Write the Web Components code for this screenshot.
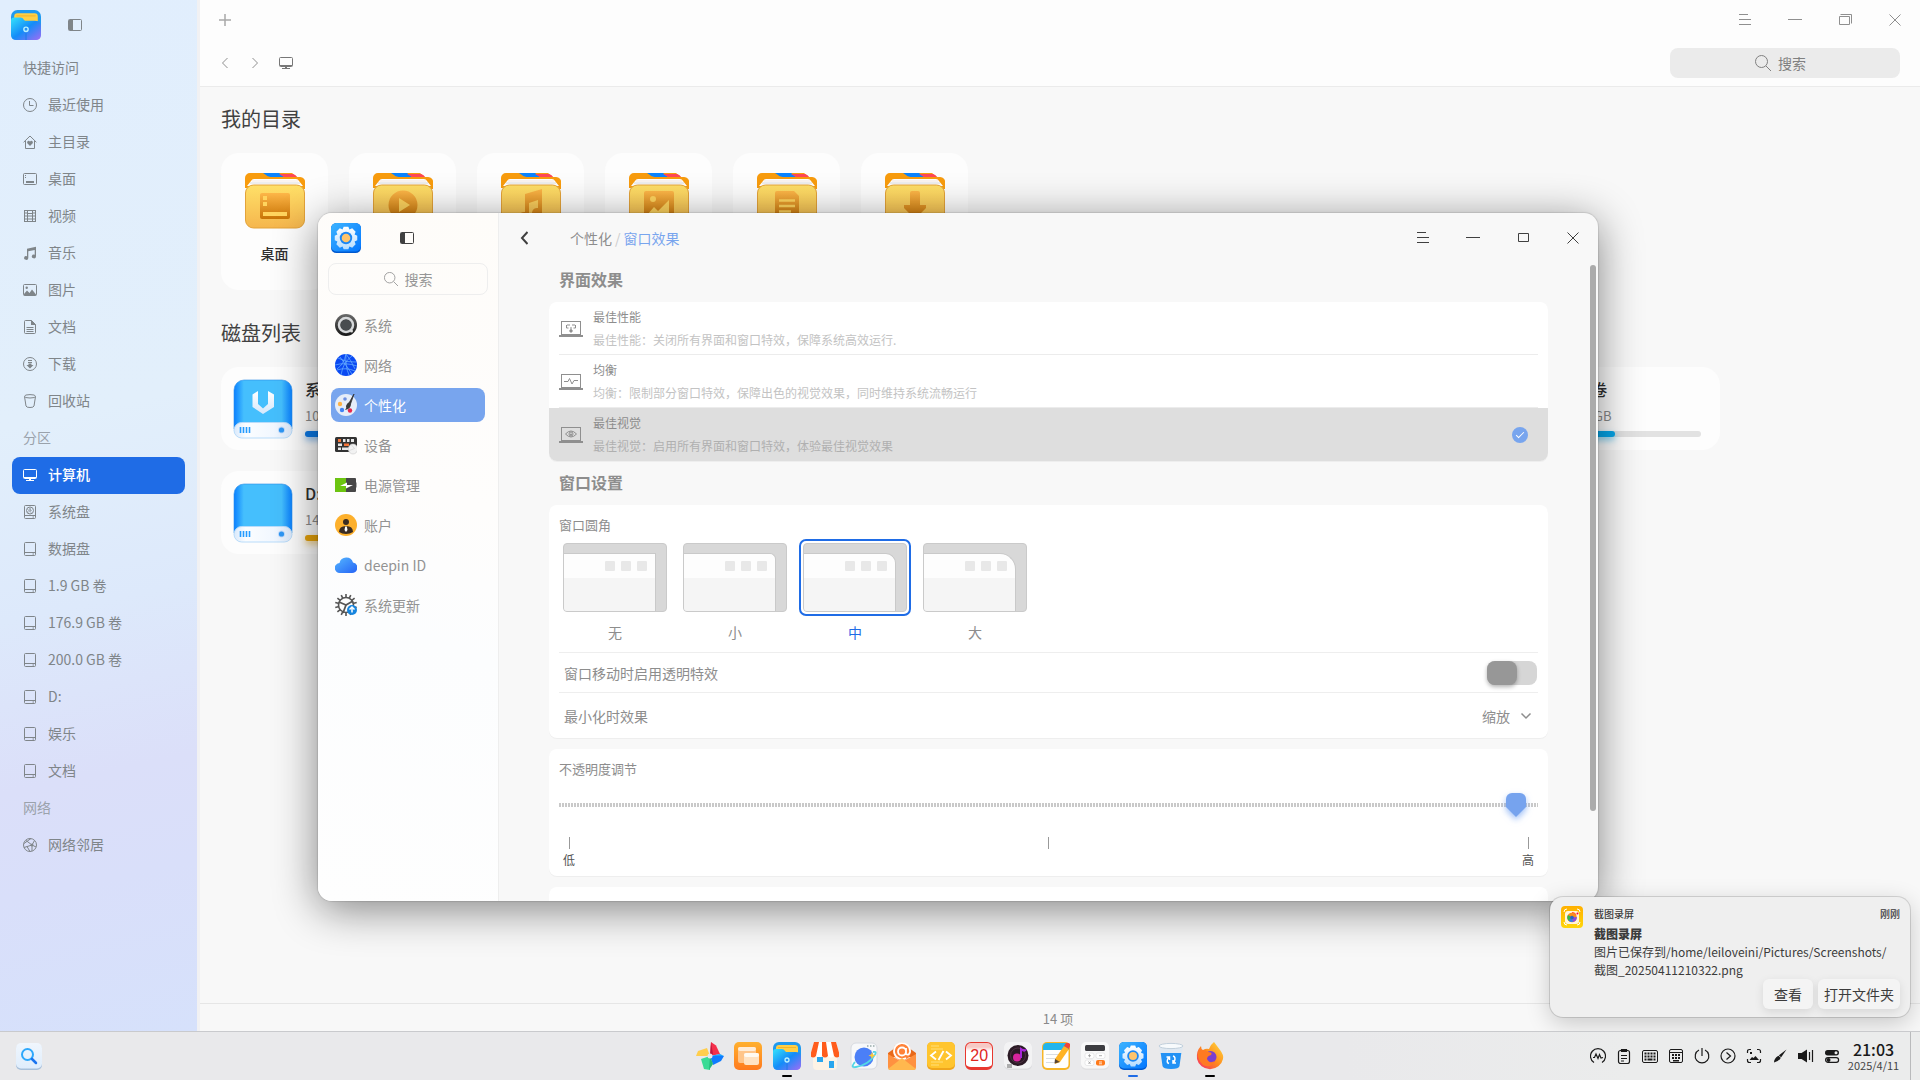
<!DOCTYPE html>
<html lang="zh-CN">
<head>
<meta charset="utf-8">
<title>计算机</title>
<style>
html, body { margin: 0; height: 100%; }
body { font: 14px/20px "Noto Sans CJK SC", "Noto Sans", sans-serif; color: #414d68; overflow: hidden; background: #f8f8f8; }
</style>
</head>
<body>
<desktop-shell>
  <file-manager></file-manager>
  <control-center slot="window"></control-center>
  <desktop-toast slot="window" app="截图录屏" time="刚刚" heading="截图录屏">图片已保存到/home/leiloveini/Pictures/Screenshots/<br>截图_20250411210322.png</desktop-toast>
  <task-dock slot="dock"></task-dock>
</desktop-shell>

<script>
/* ---------- icons: [width, height, markup] ---------- */
const line = (w, h, body, sw = 1) => [w, h, `<g fill="none" stroke="currentColor" stroke-width="${sw}">${body}</g>`];
const F = 'fill="currentColor" stroke="none"';
const drive = '<rect x="1.5" y=".5" width="11" height="13" rx="1"/><path d="M1.5 10.5h11M9.5 12h1.5"/>';

const folder = emblem => [60, 56, `
  <defs>
    <linearGradient id="a" x2="0" y2="1"><stop stop-color="#ffe068"/><stop offset="1" stop-color="#f5b64d"/></linearGradient>
    <linearGradient id="e" x2="0" y2="1"><stop stop-color="#fdb648"/><stop offset="1" stop-color="#c87406"/></linearGradient>
  </defs>
  <path d="M0 15V5a5 5 0 0 1 5-5h42l5 4h3a5 5 0 0 1 5 6v6z" fill="#f89c0e"/>
  <path d="M18 0h16l5 4h-11q-5 0-7-2z" fill="#0a84ff"/><path d="M34 1h14q3 1 4 3H39z" fill="#ff4757"/>
  <path d="M9 6h42q2 0 3 2l4 5H2l4-5q1-2 3-2z" fill="#fff"/><path d="M5 10h50" stroke="#dcdcdc"/><path d="M7 8h46" stroke="#ecd9d2" stroke-width=".6"/>
  <rect x=".5" y="12" width="59" height="43" rx="8" fill="url(#a)" stroke="#e3a33a"/>
  ${emblem}`];
const hdd = mark => [60, 60, `
  <defs>
    <linearGradient id="d"><stop stop-color="#0a80ff"/><stop offset=".17" stop-color="#45bffd"/><stop offset=".82" stop-color="#45bffd"/><stop offset="1" stop-color="#0a80ff"/></linearGradient>
    <linearGradient id="t"><stop stop-color="#d9e9fb"/><stop offset=".2" stop-color="#fbfdff"/><stop offset=".7" stop-color="#f1f7ff"/><stop offset="1" stop-color="#dce9fa"/></linearGradient>
    <linearGradient id="u" x2="0" y2="1"><stop stop-color="#fff"/><stop offset="1" stop-color="#d5e8fc"/></linearGradient>
  </defs>
  <path d="M1 50V11A10 10 0 0 1 11 1h38a10 10 0 0 1 10 10v39z" fill="url(#d)" stroke="#2d8fe8" stroke-width=".6"/>
  <rect x="1" y="43.500" width="58" height="15.500" rx="7.700" fill="url(#t)" stroke="#b9dcfa"/>
  <path d="M7.500 48v6M10.500 48v6M13.500 48v6M16.500 48v6" stroke="#249bff" stroke-width="1.600"/>
  <circle cx="48.500" cy="51" r="3.500" fill="#c5ddfb"/><circle cx="48.500" cy="51" r="2.600" fill="#2d96f5"/>${mark}`];
const keys = (x0, y0, cols, rows) => Array.from({ length: rows }, (_, r) => Array.from({ length: cols }, (_, c) =>
  `<rect x="${x0 + c * 3}" y="${y0 + r * 3}" width="2" height="2"/>`).join('')).join('');
const teeth = (cx, cy, r, n, w, h) => Array.from({ length: n }, (_, i) =>
  `<rect x="${cx - w / 2}" y="${cy - r}" width="${w}" height="${h}" transform="rotate(${i * 360 / n} ${cx} ${cy})"/>`).join('');

const ICONS = {
  recent: line(14, 14, '<circle cx="7" cy="7" r="6.500"/><path d="M6.500 3v4.500h4"/>'),
  home: line(14, 14, `<path d="M.6 7.300 7 1l6.400 6.300M2.500 6v7.500h9V6"/><path ${F} d="M7 11 4.300 8.200A1.500 1.500 0 0 1 7 6.700a1.500 1.500 0 0 1 2.700 1.500z"/>`),
  desktop: line(14, 14, `<rect x=".5" y="1.500" width="13" height="11" rx="1"/><path ${F} d="M2 3h1v1H2zM2 5h1v1H2zM3 9h8v2H3z"/>`),
  video: line(14, 14, '<rect x="1.500" y="1.500" width="11" height="11"/><path d="M4.500 1.500v11M9.500 1.500v11M4.500 7h5M4.500 4.500h5M4.500 10h5M2 4h2M2 7h2M2 10h2M10 4h2M10 7h2M10 10h2" />'),
  music: line(14, 14, `<path ${F} d="M4 2.800 13 .8v9.700a2.100 1.900 0 1 1-1.300-1.800V4L5.300 5.300v6.700A2.100 1.900 0 1 1 4 10.200z"/>`),
  picture: line(14, 14, `<rect x=".5" y="1.500" width="13" height="11" rx="1"/><circle cx="3.700" cy="4.700" r="1.200" ${F}/><path ${F} d="M1 12.500V11l3-3.500L6.500 10 9 6.500l4 5v1z"/>`),
  doc: line(14, 14, `<path d="M1.500 1.500q0-1 1-1H8.500l4 4v8q0 1-1 1h-9q-1 0-1-1zM3.500 7.500h7M3.500 9.500h7M3.500 11.500h7"/><path ${F} d="M8 0v5h5z"/>`),
  download: line(14, 14, `<circle cx="7" cy="7" r="6.500"/><path d="M5 3.500h4M5 5.500h4"/><path ${F} d="M5.500 6.500h3V8h2L7 11.500 3.500 8h2z"/>`),
  trash: line(14, 14, '<ellipse cx="7" cy="2.300" rx="5.500" ry="1.700"/><path d="M1.500 2.500 3 12q.3 1.500 4 1.500t4-1.500l1.500-9.500"/>'),
  computer: line(14, 14, `<rect x=".5" y="1.500" width="13" height="9" rx="1"/><path ${F} d="M1 9h12v1H1zM6 11h2v1H6zM3 12h8v1H3z"/>`),
  sysdrive: line(14, 14, drive + '<circle cx="7" cy="5.500" r="3.500"/><path d="M5 4.500 8 7.500M7 3v2l1.500.5M5 6.500v1"/>'),
  drive: line(14, 14, drive),
  network: line(14, 14, '<circle cx="7" cy="7" r="6.500"/><path d="M3 2.500 9 7l4 2M9 7 1 9.500M9 7l2.500-4.500M1 5.500l7-5M9 7v6M4 8.500l3 5" /><circle cx="9" cy="7" r="1"/>'),
  panel: line(14, 12, `<rect x=".5" y=".5" width="13" height="11" rx="1"/><path ${F} d="M1 1h4v10H1z"/>`),
  plus: line(12, 12, '<path d="M6 0v12M0 6h12"/>', 1.5),
  left: line(8, 12, '<path d="M6.500 1 1.500 6l5 5"/>'),
  right: line(8, 12, '<path d="M1.500 1l5 5-5 5"/>'),
  back: line(8, 14, '<path d="M7.500 1 2 7l5.500 6"/>', 2),
  down: line(12, 8, '<path d="M1.500 1.500 6 6l4.500-4.500"/>', 1.5),
  menu: line(14, 12, '<path d="M1 .5h9M1 5.500h12M1 10.500h12"/>'),
  min: line(14, 12, '<path d="M0 5.500h14"/>'),
  restore: line(14, 12, '<path d="M2.500.5h11v9M1.500 2.500h10v8h-10z"/>'),
  max: line(14, 12, '<path d="M2.500 1.500h10v8h-10z"/>'),
  close: line(12, 12, '<path d="M.5.5l11 11M11.500.5l-11 11"/>'),
  find: line(16, 16, '<circle cx="6.500" cy="6.500" r="6"/><path d="m11 11 5 5"/>'),
  perf: line(24, 16, `<rect x="2.500" y=".5" width="19" height="13"/><path ${F} d="M0 14h24v2H0z"/><path d="M8 4h3M13 4h3M7.500 4v3h2M16.500 4v3h-2M12 6v2"/><path ${F} d="M12 7.500 14 10l-2 2-2-2z"/>`),
  balance: line(24, 16, `<rect x="2.500" y=".5" width="19" height="13"/><path ${F} d="M0 14h24v2H0z"/><path d="M5 7.500h4l1.500-3L13 10l2-3.500h4"/>`),
  visual: line(24, 16, `<rect x="2.500" y=".5" width="19" height="13"/><path ${F} d="M0 14h24v2H0z"/><path d="M6.500 7q5.500-6 11 0-5.500 6-11 0z"/><circle cx="12" cy="7" r="2"/><circle cx="12" cy="7.500" r="1" ${F}/>`),

  fDesktop: folder('<path d="M17 20h26q2 0 2 2v22q0 2-2 2H17q-2 0-2-2V22q0-2 2-2z" fill="url(#e)"/><path d="M18 23h4v4h-4zM18 29h4v4h-4zM18 39h24v4H18z" fill="#ffd45e"/>'),
  fVideo: folder('<circle cx="30" cy="32" r="14.500" fill="url(#e)"/><path d="M26 25v14l11-7z" fill="#ffd45e"/>'),
  fMusic: folder('<path d="M24 21 41 16v24a5 5 0 1 1-4-5V27l-9 3v14a5 5 0 1 1-4-5z" fill="url(#e)"/>'),
  fPicture: folder('<rect x="15" y="18" width="30" height="28" rx="2" fill="url(#e)"/><circle cx="24" cy="26" r="3" fill="#ffd45e"/><path d="M18 42 25 34l4 4L40 27v15z" fill="#ffd45e"/>'),
  fDoc: folder('<path d="M20 18h17l5 5v20q0 3-3 3H21q-3 0-3-3V20q0-2 2-2z" fill="url(#e)"/><path d="M22 27.500h16M22 33h16M22 38.500h12" stroke="#ffd45e" stroke-width="2.500"/>'),
  fDownload: folder('<path d="M25 20q0-2 2-2h6q2 0 2 2v12h6v3L30 46 19 35v-3h6z" fill="url(#e)"/>'),
  hdd: hdd(''),
  hddSystem: hdd('<path d="M19.500 15.500 25 12v13l5 4.500 5-4.500V12l6 3.500v12.500L30 35l-10.500-7z" fill="url(#u)"/>'),

  appFiles: [28, 28, `<defs><linearGradient id="a" y2="1"><stop stop-color="#35e3fb"/><stop offset=".5" stop-color="#148cf8"/><stop offset="1" stop-color="#a06cf5"/></linearGradient></defs>
    <rect width="28" height="28" rx="6" fill="#1f9af0"/><rect x="3" y="3" width="22" height="13" rx="3" fill="#ffcf45"/><path d="M5 5.500h18" stroke="#f2b52b"/>
    <path d="M0 10q0-3 3-3h6q2 0 3 2l1 1h9q6 0 6 5v8q0 5-5 5H5q-5 0-5-5z" fill="url(#a)"/><path d="M14 21v7" stroke="#1d7be8"/><circle cx="14" cy="18" r="2" fill="#2491f5" stroke="#b8f1ff" stroke-width="1.300"/>`],
  appSettings: [28, 28, `<defs><linearGradient id="a" x2="1" y2="1"><stop stop-color="#3db4ff"/><stop offset="1" stop-color="#0376ff"/></linearGradient><linearGradient id="b" x2="0" y2="1"><stop stop-color="#fff"/><stop offset="1" stop-color="#b5dcff"/></linearGradient></defs>
    <rect width="28" height="28" rx="5" fill="#0059cf"/><rect width="28" height="26.500" rx="5" fill="url(#a)"/>
    <path d="M11.800 3.500h4.400l1 2.500 2.600-1 3.200 3.200-1 2.600 2.500 1v4.400l-2.500 1 1 2.600-3.200 3.200-2.600-1-1 2.500h-4.400l-1-2.500-2.600 1L5 19.800l1-2.600-2.500-1v-4.400l2.500-1-1-2.600L8.200 5l2.600 1z" fill="url(#b)"/>
    <circle cx="14" cy="14" r="5.800" fill="#1c87f5"/><circle cx="14" cy="14" r="4" fill="#ffc46b"/>`],
  launcher: [28, 28, `<path d="M15 0 20 3.500 24 12 14 14z" fill="#f5304b"/><path d="M28 14 25 19 17 23l-3-9z" fill="#0f7bff"/><path d="M24 12 14 14l3 0h11z" fill="#1ba0ff"/><path d="M14 28 8 27 5 17l9-3z" fill="#3adb95"/><path d="M13 28l1-14 3 8z" fill="#25b97a"/><path d="M0 14 2 9l9-3 3 8z" fill="#ffce4d"/><path d="M15 0l-1 14 3-2z" fill="#c31840"/><circle cx="14" cy="14" r="2.500" fill="#e7e7ea"/>`],
  multitask: [28, 28, `<defs><linearGradient id="a" x2="0" y2="1"><stop stop-color="#ffb02e"/><stop offset="1" stop-color="#ff7a1e"/></linearGradient></defs><rect width="28" height="28" rx="5" fill="url(#a)"/><rect x="4" y="5" width="18" height="16" rx="2" fill="#ffc58a"/><rect x="4" y="5" width="18" height="4" rx="2" fill="#ffecd6"/><rect x="10" y="11" width="15" height="12" rx="2" fill="#ffe3c4"/><rect x="10" y="11" width="15" height="4" rx="2" fill="#fffaf2"/>`],
  store: [28, 28, `<rect x="2" y="10" width="24" height="18" rx="4" fill="#fdf3e6"/><path d="M3 0h22l4 14q-3 3-6 0-3 3-6 0-3 3-6 0-3 3-6 0-3 3-6 0z" fill="#fff"/><path d="M3 0h5L5 14q-3 3-6 0zM11 0h4l2 14q-3 3-6 0zM20 0h5l4 14q-3 3-6 0z" fill="#ff5c1c"/><path d="M6 15h6v5H6zM18 19h5v7h-5z" fill="#2aa6ee"/>`],
  browser: [28, 28, `<rect x="1" y="1" width="26" height="26" rx="5" fill="#f7f8fa" stroke="#d7dae0"/><path d="M17 4h1.500M20 4h1.500M23 4h1.500" stroke="#9aa" stroke-width="1.500"/><circle cx="14" cy="15" r="9.500" fill="#4b7ff7"/><path d="M5 20q-5 6 1 5 12-2 18-11 4-5-1-4" fill="none" stroke="#52d6e5" stroke-width="1.800"/><path d="m22 10 1 2.500 2.500 1-2.500 1-1 2.500-1-2.500-2.500-1 2.500-1z" fill="#ffc83a"/>`],
  mail: [28, 28, `<path d="M0 11 14 1l14 10v4H0z" fill="#e8691a"/><circle cx="14" cy="9.500" r="9" fill="#ff8238"/><path d="M18 6v6q3 2 4-2a8 8 0 1 0-4 6M18 9.500a4 4 0 1 1-8 0 4 4 0 0 1 8 0" fill="none" stroke="#fff" stroke-width="1.800"/><path d="M0 12 14 20 28 12v13q0 3-3 3H3q-3 0-3-3z" fill="#ff9140"/><path d="M0 27 14 16l14 11q-1 1-3 1H3q-2 0-3-1z" fill="#ffb84e"/>`],
  editor: [28, 28, `<rect width="28" height="28" rx="5" fill="#f0a61c"/><rect width="28" height="26" rx="5" fill="#ffc52f"/><path d="M4 4h8M4 7h12M4 20h12M4 23h8" stroke="#ffdf7a"/><path d="M9 9.500 4 13.500l5 4M19 9.500l5 4-5 4M16.500 9l-5 9" fill="none" stroke="#fff" stroke-width="1.800"/>`],
  music28: [28, 28, `<rect width="28" height="28" rx="5" fill="#dcdcde"/><rect width="28" height="26.500" rx="5" fill="#f3f3f4"/><circle cx="14" cy="13.500" r="10.500" fill="#2b1a25"/><circle cx="14" cy="13.500" r="7.500" fill="none" stroke="#55384a" stroke-width=".8"/><circle cx="13" cy="15.500" r="4" fill="#d9249e"/><path d="M16 16V5q3 3 7 2-1 4-5 2v7z" fill="#a626d6"/><path d="M3 25h5M3 23h5" stroke="#666"/>`],
  notes: [28, 28, `<rect width="28" height="28" rx="5" fill="#f7b628"/><path d="M1.500 8h25v14q0 4-4 4h-17q-4 0-4-4z" fill="#fff"/><path d="M1 8V5q0-4 4-4h18q4 0 4 4v3z" fill="#23b5ec"/><path d="M4 12.500h18M4 16.500h14M4 20.500h10" stroke="#d9dde2"/><path d="m13 17 9-13 5 3-9 13-5 2z" fill="#ffb325"/><path d="m22 4 1.500-2.500q2-1.500 4 0t0 3.500L27 7z" fill="#f04438"/><path d="m13 17-.5 4.500L18 20z" fill="#5a4632"/>`],
  calc: [28, 28, `<rect y="1" width="28" height="27" rx="5" fill="#e0e0e2"/><rect width="28" height="26.500" rx="5" fill="#f8f8f8"/><rect x="4" y="3" width="20" height="6" rx="1.500" fill="#3c3c40"/><g fill="#fff" stroke="#dcdcde" stroke-width=".6"><rect x="4" y="11" width="9" height="5.500" rx="2"/><rect x="15" y="11" width="9" height="5.500" rx="2"/><rect x="4" y="18" width="9" height="5.500" rx="2"/></g><rect x="15" y="18" width="9" height="5.500" rx="2" fill="#ff7a1a"/><path d="M7 13.700h3M8.500 12.200v3M18 13.700h3M7.500 19.500l2 2.500M9.500 19.500l-2 2.500" stroke="#999" stroke-width=".8"/><path d="M18 20h3M18 21.800h3" stroke="#fff" stroke-width=".8"/>`],
  trashFull: [28, 28, `<path d="M3 6h22l-2.500 18q-.5 3-8.500 3t-8.500-3z" fill="#2292f5"/><path d="M2.300 4h23.400L25 11H3z" fill="#dfe8f1"/><ellipse cx="14" cy="4" rx="12" ry="2.600" fill="#f7fafc" stroke="#c2d0dc"/><path d="M12 21.500q-3-1-1-5l1-1M9.500 15h3v3M16 14q3 1 1.500 5l-1 1.500M19 21h-3v-3" fill="none" stroke="#fff" stroke-width="1.500"/>`],
  firefox: [28, 28, `<defs><linearGradient id="a" x1="1" y1="0" x2="0" y2="1"><stop stop-color="#ffe03f"/><stop offset=".5" stop-color="#ff8a1d"/><stop offset="1" stop-color="#f5266f"/></linearGradient></defs><path d="M18 0q3 4 6 8 4 5 3 9a13.300 13 0 0 1-26 0Q0 9 5 4q0 3 2 4 3-2 6-1 1-4 5-7z" fill="url(#a)"/><circle cx="14.500" cy="15" r="6" fill="#7a3fd0"/><path d="M2 10q6-4 10 0 5 0 3 3-4 1-4 4 2 5 8 2-4 8-12 4Q1 18 2 10z" fill="#ff7a22"/>`],
  search28: [28, 28, `<defs><linearGradient id="a" x2="0" y2="1"><stop stop-color="#f0f6fd"/><stop offset="1" stop-color="#dfedfc"/></linearGradient></defs><rect x="1" y="2" width="26" height="26" rx="5" fill="#a8c0da"/><rect x="1" y="1" width="26" height="25.500" rx="5" fill="url(#a)"/><circle cx="12.500" cy="12.500" r="5.500" fill="none" stroke="#2ea8fb" stroke-width="2"/><path d="m17 17 4 4" stroke="#1b74f0" stroke-width="2.500" stroke-linecap="round"/>`],
  capture: [22, 22, `<defs><linearGradient id="a" x2="0" y2="1"><stop stop-color="#ffb000"/><stop offset="1" stop-color="#ffd60a"/></linearGradient></defs><rect width="22" height="22" rx="4" fill="url(#a)"/><path d="M3 6q0-3 3-3M16 3q3 0 3 3M3 16q0 3 3 3M19 16q0 3-3 3" fill="none" stroke="#fff"/><rect x="4" y="5" width="14" height="13" rx="3" fill="#fff6dc"/><path d="M11 11V6a5 5 0 0 1 4.500 3z" fill="#ff4a3d"/><circle cx="11" cy="11.500" r="4.800" fill="#fb8c1c"/><path d="M11 11.500 15.800 11a4.800 4.800 0 0 1-3.800 5z" fill="#8a4be0"/><path d="M11 11.500 12 16a4.800 4.800 0 0 1-4.500-1.500z" fill="#2f7df0"/><path d="M11 11.500 7.500 14.700A4.800 4.800 0 0 1 7 9z" fill="#35b552"/><circle cx="11" cy="11.500" r="1.800" fill="#2b63c4"/><circle cx="16.500" cy="7.500" r="1" fill="#f03"/>`],

  sSystem: [22, 22, `<defs><linearGradient id="a" x2="0" y2="1"><stop stop-color="#6b6b6b"/><stop offset="1" stop-color="#161616"/></linearGradient></defs><circle cx="11" cy="11" r="11" fill="url(#a)"/><circle cx="11" cy="11" r="7" fill="#3f4244" stroke="#d6d8da" stroke-width="2.500"/><circle cx="11" cy="11" r="5.300" fill="#494d50"/><circle cx="16.500" cy="17" r="1.500" fill="#ddd"/>`],
  sNetwork: [22, 22, `<circle cx="11" cy="11" r="11" fill="#0a49f2"/><path d="M11 0q-2 10-9 15M11 0q-1 12 3 21M11 0q5 6 9 15M3 4q8 5 18 4M0 11q10-3 22 1M2 16q9-3 18 1M5 3q6 8 12 17M17 2Q8 8 6 21" fill="none" stroke="#6fb4ff" stroke-width=".7"/>`],
  sPersonal: [22, 22, `<circle cx="11" cy="11" r="11" fill="#e6edf8"/><circle cx="5" cy="10" r="2.200" fill="#ffb347"/><circle cx="10" cy="5" r="1.800" fill="#6d8fe0"/><circle cx="7" cy="16" r="2.200" fill="#3f82f5"/><circle cx="15" cy="16.500" r="2.200" fill="#e8264e"/><path d="M19 0 14 9l1.500 1z" fill="#333" stroke="#333" stroke-width=".8"/><path d="M13.500 8.500 16 10q0 5-6 6 2-2 1-4 1-3 2.500-3.500z" fill="#3a3a3a"/>`],
  sDevice: [22, 22, `<rect y="3" width="22" height="15" rx="1.500" fill="#333"/><path d="M3 5h3v3H3z" fill="#f4763a"/><path d="M8 5h2.500v3H8zM12 5h2.500v3H12zM16 5h3v3h-3zM3 9.500h4v2.500H3zM3 13.500h3v2.500H3zM7 13.500h7v2.500H7z" fill="#e8e8e8"/><path d="M9 9.500h5v2.500H9z" fill="#f4763a"/><ellipse cx="18" cy="15" rx="4.700" ry="5" fill="#f2f2f2" stroke="#c9c9c9" stroke-width=".6"/><path d="M16 10.500l3.500 4-5 2" fill="none" stroke="#ccc" stroke-width=".6"/>`],
  sPower: [22, 22, `<rect y="4" width="21" height="14" rx="1" fill="#474747"/><path d="M1 4h10v14H1q-1 0-1-1V5q0-1 1-1z" fill="#6cc510"/><path d="M21 8.500h1v5h-1z" fill="#aaa"/><path d="m5 12 7-3.500v2.500h6l-7 3.500V12z" fill="#fff"/>`],
  sAccount: [22, 22, `<circle cx="11" cy="11" r="11" fill="#fdb02c"/><circle cx="11" cy="8" r="3" fill="#3a2c22"/><path d="M4 18q0-6 7-6t7 6q-3 2-7 2t-7-2z" fill="#3a2c22"/><path d="M10.200 12.500h1.600L12.500 16 11 18l-1.500-2z" fill="#fff"/>`],
  sCloud: [22, 22, `<defs><linearGradient id="a" x2="1" y2="1"><stop stop-color="#55b7ff"/><stop offset="1" stop-color="#2563f5"/></linearGradient></defs><path d="M5 19a5 5 0 0 1-.5-10 7 7 0 0 1 13.500-.5A5.300 5.300 0 0 1 17 19z" fill="url(#a)"/>`],
  sUpdate: [22, 22, `<g fill="#555">${teeth(11, 11, 11, 14, 1.6, 4)}</g><circle cx="11" cy="11" r="7.500" fill="#fdfdfd" stroke="#555" stroke-width="1.600"/><path d="M11 11 4 8M11 11l7-4M11 11l-3 8" stroke="#555" stroke-width="1.800"/><circle cx="17" cy="16" r="5" fill="#1685df"/><path d="M17 18.500v-4M14.500 15.500 17 13l2.500 2.500" fill="none" stroke="#fff" stroke-width="1.500"/>`],

  tWave: line(16, 16, '<path d="M4 14.500a7.500 7.500 0 1 1 8 0M3 9.500l1.500 0 1.500-3.500L8 10.500l1.500-4 1.500 3.500 2-.5"/>', 1.2),
  tClip: line(16, 16, '<rect x="2.500" y="2.500" width="11" height="13" rx="2"/><path d="M5 7.500h6M5 10.500h6M5 13h3M5.500 1.500h5v2h-5z"/>', 1.2),
  tKeys: [16, 16, `<rect x=".5" y="2.500" width="15" height="12" rx="1.500" fill="none" stroke="currentColor"/><g fill="currentColor">${keys(2.5, 4.500, 4, 2)}<path d="M2.500 10.500h2v2h-2zM5.500 10.500h5v2h-5zM11.500 10.500h2v2h-2z"/></g>`],
  tBoard: [16, 16, `<rect x="1.500" y="1.500" width="13" height="13" rx="1.500" fill="none" stroke="currentColor"/><path d="M2 4.500h12" stroke="currentColor"/><g fill="currentColor">${keys(4, 6, 3, 1)}${keys(4, 9, 3, 1)}<path d="M5 12h6v1.500H5z"/></g>`],
  tPower: line(16, 16, '<path d="M5 2a6.800 6.800 0 1 0 6 0M8 0v8"/>', 1.2),
  tNext: line(16, 16, '<circle cx="8" cy="8" r="7"/><path d="M6.500 4.500 10.500 8l-4 3.500"/>', 1.2),
  tShot: line(16, 16, `<path d="M1.500 5V3.500q0-2 2-2H5M11 1.500h1.500q2 0 2 2V5M1.500 11v1.500q0 2 2 2H5M14.500 11v1.500q0 2-2 2H11"/><path ${F} d="m3.500 12 2.500-3 1.500 1L9.500 8l3.500 4zM4 4h2v2H4z"/>`, 1.2),
  tPen: [16, 16, '<path d="M2 14.500q0-4 4-6.500L14.500 1.500 9 9.500q-2 4-7 5z" fill="currentColor"/><path d="m6 7 4 3.500" stroke="#ebecec" stroke-width=".8"/>'],
  tVolume: [16, 16, '<path d="M0 5h3.500L9 1.500v13L3.500 11H0z" fill="currentColor"/><path d="M11.500 4v8M14.500 2v12" stroke="currentColor" stroke-width="1.200"/>'],
  tSwitch: [16, 16, '<rect x="1" y="2" width="14" height="5.500" rx="2.700" fill="currentColor"/><circle cx="12" cy="4.700" r="1.500" fill="#ebecec"/><rect x="1.600" y="9.600" width="13" height="4.800" rx="2.400" fill="none" stroke="currentColor" stroke-width="1.200"/><circle cx="4.500" cy="12" r="2" fill="currentColor"/>'],
};

/* ---------- element helper ---------- */
const RESET = `
  *, *::before, *::after { box-sizing: border-box; }
  button, input, select { font: inherit; color: inherit; margin: 0; }
  button { border: 0; padding: 0; background: none; display: flex; align-items: center; justify-content: center; }
  a { color: inherit; text-decoration: none; }
  h2, h3, p { margin: 0; padding: 0; font-weight: inherit; font-size: inherit; }
`;
function define(name, css, html) {
  customElements.define(name, class extends HTMLElement {
    constructor() { super(); this.attachShadow({ mode: 'open' }); }
    connectedCallback() {
      if (this.shadowRoot.childNodes.length) return;
      const t = document.createElement('template');
      t.innerHTML = `<style>${RESET}${css}</style>` + html(a => this.getAttribute(a) || '', this);
      this.shadowRoot.append(t.content.cloneNode(true));
    }
  });
}

define('ui-icon', ':host { display: inline-flex; flex: none; } svg { display: block; }', a => {
  const [w, h, body] = ICONS[a('name')];
  const s = Number(a('size')) || w;
  return `<svg width="${s}" height="${s * h / w}" viewBox="0 0 ${w} ${h}" aria-hidden="true">${body}</svg>`;
});

define('window-controls', `
  :host { display: flex; }
  button { width: 50px; height: 40px; }`,
  a => `<button aria-label="菜单"><ui-icon name="menu"></ui-icon></button>
    <button aria-label="最小化"><ui-icon name="min"></ui-icon></button>
    <button aria-label="最大化"><ui-icon name="${a('middle')}"></ui-icon></button>
    <button aria-label="关闭"><ui-icon name="close"></ui-icon></button>`);

define('search-field', `
  :host { display: block; box-sizing: border-box; }
  label { height: 100%; display: flex; align-items: center; justify-content: center; gap: 7px; }
  input { width: 28px; padding: 0 0 1px; border: 0; outline: 0; background: none; height: 20px; }
  input::placeholder { color: inherit; opacity: 1; }`,
  a => `<label><ui-icon name="find" size="${a('icon') || 16}"></ui-icon><input type="text" placeholder="搜索" aria-label="搜索"></label>`);

/* ---------- desktop ---------- */
define('desktop-shell', `
  :host { display: flex; flex-direction: column; height: 100vh; position: relative; overflow: hidden; }
  main { flex: 1; min-height: 0; display: flex; }`,
  () => `<main><slot></slot></main><slot name="window"></slot><slot name="dock"></slot>`);

/* ---------- file manager ---------- */
define('place-item', `
  :host { display: block; }
  a { display: flex; align-items: center; gap: 11px; height: 37px; padding: 0 0 1px 11px; border-radius: 8px; color: #7f8589; }
  a.on { background: #1f6ce6; color: #fff; font-weight: 500; }
  span { padding-bottom: 2px; }`,
  a => `<a href="#" class="${a('state')}"><ui-icon name="${a('icon')}"></ui-icon><span><slot></slot></span></a>`);

const places = [['recent', '最近使用'], ['home', '主目录'], ['desktop', '桌面'], ['video', '视频'], ['music', '音乐'], ['picture', '图片'], ['doc', '文档'], ['download', '下载'], ['trash', '回收站']];
const volumes = [['computer', '计算机', 'on'], ['sysdrive', '系统盘'], ['drive', '数据盘'], ['drive', '1.9 GB 卷'], ['drive', '176.9 GB 卷'], ['drive', '200.0 GB 卷'], ['drive', 'D:'], ['drive', '娱乐'], ['drive', '文档']];
const placeList = l => l.map(([i, t, s]) => `<place-item icon="${i}" state="${s || ''}">${t}</place-item>`).join('');

define('places-bar', `
  :host { display: block; width: 200px; box-sizing: border-box; flex: none; border-right: 3px solid #f1f1f3; padding: 0 12px;
    background: linear-gradient(168deg, #e1eefd 0%, #e2effb 40%, #dde9fb 58%, #dbdff9 74%, #d9dffa 84%, #d6e1fb 100%); }
  header { height: 50px; display: flex; align-items: flex-start; gap: 27px; margin-left: -1px; padding-top: 10px; color: #7f8589; }
  header button { height: 30px; }
  h3 { height: 37px; line-height: 34px; padding-left: 11px; color: #9aa2ab; }
  h3.first { color: #7f8589; }`,
  () => `<header><ui-icon name="appFiles" size="30"></ui-icon><button aria-label="侧边栏"><ui-icon name="panel"></ui-icon></button></header>
    <nav><h3 class="first">快捷访问</h3>${placeList(places)}<h3>分区</h3>${placeList(volumes)}<h3>网络</h3>${placeList([['network', '网络邻居']])}</nav>`);

define('folder-card', `
  :host { display: flex; flex-direction: column; align-items: center; width: 107px; height: 137px; padding-top: 20px; gap: 14px;
    border-radius: 18px; background: #fdfdfd; color: #303030; font-weight: 500; box-sizing: border-box; }
  span { padding-bottom: 2px; }`,
  a => `<ui-icon name="${a('icon')}"></ui-icon><span><slot></slot></span>`);

define('disk-card', `
  :host { display: flex; gap: 12px; height: 83px; padding: 12px 19px 0 12px; border-radius: 18px; background: #fdfdfd; box-sizing: border-box; }
  div { flex: 1; }
  p { font-size: 16px; line-height: 20px; color: #303030; font-weight: 500; }
  small { display: block; font-size: 13px; line-height: 20px; margin-top: 7px; color: #8a8a8a; }
  .bar { height: 6px; border-radius: 3px; background: #e2e2e2; margin-top: 5px; }
  .bar i { display: block; height: 6px; border-radius: 3px; background: var(--bar); box-shadow: 0 3px 6px color-mix(in srgb, var(--bar) 50%, transparent); }`,
  a => `<ui-icon name="${a('icon')}"></ui-icon><div><p>${a('name')}</p><small>${a('used')}</small><div class="bar"><i style="width:${a('fill')}%"></i></div></div>`);

define('file-manager', `
  :host { flex: 1; display: flex; min-width: 0; background: #f8f8f8; }
  section { flex: 1; min-width: 0; display: flex; flex-direction: column; }
  .top { background: #fdfdfd; border-bottom: 1px solid #ebebeb; color: #8f8f8f; }
  .tabs { height: 40px; display: flex; justify-content: space-between; }
  .tabs > button { width: 50px; color: #a8a8a8; }
  .tools { height: 46px; display: flex; align-items: center; padding: 0 20px 0 10px; }
  .tools button { width: 30px; height: 30px; }
  .tools button:nth-child(3) { width: 32px; color: #777; }
  search-field { margin-left: auto; width: 230px; height: 30px; padding-right: 9px; border-radius: 8px; background: #ebebeb; color: #808080; }
  .body { flex: 1; padding: 16px 21px 0; min-height: 0; }
  h2 { font-size: 20px; line-height: 32px; margin-bottom: 18px; color: #414141; }
  .folders { display: flex; gap: 21px; }
  .folders + h2 { margin-top: 27px; }
  .disks { display: grid; grid-template-columns: repeat(auto-fill, 283px); gap: 21px; }
  footer { border-top: 1px solid #e6e6e6; height: 28px; display: flex; align-items: center; justify-content: center; font-size: 13px; color: #8a8a8a; padding: 3px 4px 0 0; }`,
  () => `<places-bar></places-bar>
  <section>
    <div class="top">
      <div class="tabs"><button aria-label="新建标签"><ui-icon name="plus"></ui-icon></button><window-controls middle="restore"></window-controls></div>
      <div class="tools"><button aria-label="后退"><ui-icon name="left"></ui-icon></button><button aria-label="前进"><ui-icon name="right"></ui-icon></button><button aria-label="计算机"><ui-icon name="computer"></ui-icon></button><search-field></search-field></div>
    </div>
    <div class="body">
      <h2>我的目录</h2>
      <div class="folders">
        <folder-card icon="fDesktop">桌面</folder-card><folder-card icon="fVideo"></folder-card><folder-card icon="fMusic"></folder-card>
        <folder-card icon="fPicture"></folder-card><folder-card icon="fDoc"></folder-card><folder-card icon="fDownload"></folder-card>
      </div>
      <h2>磁盘列表</h2>
      <div class="disks">
        <disk-card icon="hddSystem" name="系统盘" used="10.6/15.0 GB" fill="70" style="--bar:#0a78e6"></disk-card>
        <disk-card icon="hdd" fill="40" style="--bar:#0a78e6"></disk-card>
        <disk-card icon="hdd" fill="40" style="--bar:#0a78e6"></disk-card>
        <disk-card icon="hdd" fill="40" style="--bar:#0a78e6"></disk-card>
        <disk-card icon="hdd" name="200.0 GB 卷" used="104.3/200.0 GB" fill="52" style="--bar:#06a6ea"></disk-card>
        <disk-card icon="hdd" name="D:" used="146/200 GB" fill="73" style="--bar:#e6a20a"></disk-card>
        <disk-card icon="hdd" fill="40" style="--bar:#0a78e6"></disk-card>
        <disk-card icon="hdd" fill="40" style="--bar:#0a78e6"></disk-card>
      </div>
    </div>
    <footer>14 项</footer>
  </section>`);

/* ---------- control center ---------- */
define('module-item', `
  :host { display: block; }
  a { display: flex; align-items: center; gap: 7px; height: 34px; padding-left: 4px; border-radius: 8px; color: #939393; }
  a.on { background: #78a5ee; color: #fff; }
  span { padding-bottom: 1px; }`,
  a => `<a href="#" class="${a('state')}"><ui-icon name="${a('icon')}"></ui-icon><span><slot></slot></span></a>`);

define('setting-card', `
  :host { display: block; border-radius: 8px; background: #fff; overflow: hidden; box-shadow: 0 1px 0 #eeeeee; flex: none; }`,
  () => `<slot></slot>`);

define('effect-list', `
  label { display: flex; align-items: center; gap: 10px; height: 53px; padding: 0 20px 0 10px; position: relative; }
  label + label::before { content: ""; position: absolute; left: 10px; right: 10px; top: -1px; height: 1px; background: #ececec; }
  label:has(:checked) { background: #dedede; }
  span { flex: 1; display: flex; flex-direction: column; gap: 5px; font-size: 12px; line-height: 18px; color: #c3c3c3; }
  b { font-weight: 400; color: #8d8d8d; }
  label:has(:checked) span { color: #b0b0b0; }
  ui-icon { color: #8f8f8f; }
  input { appearance: none; width: 16px; height: 16px; border-radius: 8px; }
  input:checked { background: #78a5ee; display: grid; place-items: center; }
  input:checked::before { content: ""; width: 8px; height: 4px; border: solid #fff; border-width: 0 0 1px 1px; transform: translateY(-1px) rotate(-45deg); }`,
  () => [['perf', '最佳性能', '最佳性能：关闭所有界面和窗口特效，保障系统高效运行.'], ['balance', '均衡', '均衡：限制部分窗口特效，保障出色的视觉效果，同时维持系统流畅运行'], ['visual', '最佳视觉', '最佳视觉：启用所有界面和窗口特效，体验最佳视觉效果']]
    .map(([i, t, d], n) => `<label><ui-icon name="${i}"></ui-icon><span><b>${t}</b>${d}</span><input type="radio" name="effect" ${n === 2 ? 'checked' : ''}></label>`).join(''));

define('corner-picker', `
  :host { display: flex; gap: 8px; }
  label { width: 112px; display: flex; flex-direction: column; align-items: center; gap: 6px; position: relative; color: #8d8d8d; }
  .frame { width: 112px; height: 77px; padding: 2px; border: 2px solid transparent; border-radius: 7px; }
  .screen { height: 69px; border-radius: 4px; background: #d8d8d8; border: 1px solid #cacaca; overflow: hidden; padding: 9px 10px 0 0; }
  .win { height: 60px; border: solid #c9c9c9; border-width: 1px 1px 0 0; border-radius: 0 var(--r) 0 0; background: linear-gradient(#fdfdfd 24px, #f5f5f5 24px);
    display: flex; justify-content: flex-end; gap: 6px; padding: 7px 8px 0 0; }
  .win i { width: 10px; height: 10px; border-radius: 1px; background: #e8e8e8; }
  input { appearance: none; position: absolute; inset: 0; }
  label:has(:checked) { color: #1f6ce6; }
  label:has(:checked) .frame { border-color: #1f6ce6; }`,
  () => [['无', 0], ['小', 6], ['中', 10], ['大', 16]].map(([t, r]) => `<label><input type="radio" name="corner" ${t === '中' ? 'checked' : ''}><span class="frame"><div class="screen" style="--r:${r}px"><div class="win"><i></i><i></i><i></i></div></div></span>${t}</label>`).join(''));

define('opacity-slider', `
  :host { display: block; }
  .track { height: 24px; background: repeating-linear-gradient(90deg, #c9c9c9 0 2px, transparent 2px 3px) 0 10px / 100% 4px no-repeat; }
  input { display: block; appearance: none; width: 100%; height: 24px; background: none; filter: drop-shadow(0 3px 3px rgba(80,140,240,.55)); }
  input::-webkit-slider-thumb { appearance: none; width: 20px; height: 24px; background: #76a3ee; clip-path: path('M6 0h8a6 6 0 0 1 6 6v8L10 24 0 14V6a6 6 0 0 1 6-6z'); }
  .marks { display: flex; justify-content: space-between; margin-top: 20px; font-size: 12px; line-height: 16px; color: #555; }
  .marks span { width: 20px; display: flex; flex-direction: column; align-items: center; gap: 3px; }
  .marks span::before { content: ""; width: 1px; height: 12px; background: #999; }`,
  a => `<div class="track"><input type="range" min="20" max="100" value="99" aria-label="${a('label')}"></div><div class="marks"><span>低</span><span></span><span>高</span></div>`);

define('control-center', `
  :host { position: absolute; left: 318px; top: 213px; width: 1280px; height: 688px; display: flex; border-radius: 14px; overflow: hidden; background: #f8f8f8; color: #8d8d8d;
    box-shadow: 0 0 1px 1px rgba(0,0,0,.1), 0 8px 44px rgba(0,0,0,.48); }
  aside { width: 181px; flex: none; border-right: 1px solid #eeeeee; background: linear-gradient(200deg, #fefcf9, #fefdfc 40%, #fcfdfe 60%, #fefefe); }
  aside header { height: 50px; display: flex; align-items: center; padding-left: 13px; gap: 39px; color: #404040; }
  search-field { margin: 0 10px 13px; height: 32px; border: 1px solid #eeeeee; border-radius: 8px; color: #969696; }
  nav { padding: 0 13px; display: flex; flex-direction: column; gap: 6px; }
  .pane { flex: 1; min-width: 0; display: flex; flex-direction: column; position: relative; }
  .bar { height: 50px; flex: none; display: flex; align-items: center; color: #404040; }
  .bar > button { width: 50px; height: 40px; }
  .crumbs { margin-left: 21px; display: flex; gap: 3px; flex: 1; color: #8d8d8d; }
  .crumbs i { font-style: normal; color: #cccccc; }
  .crumbs a + i + a { color: #78a5ee; }
  .scroll { flex: 1; min-height: 0; overflow: hidden; padding: 0 50px; display: flex; flex-direction: column; }
  h2 { font-size: 16px; line-height: 24px; font-weight: 700; color: #8d8d8d; margin: 9px 10px 11px; }
  h2:first-child { margin-top: 4px; }
  h3 { font-size: 13px; line-height: 20px; color: #8d8d8d; }
  .block { padding: 10px; }
  .block h3 { margin-bottom: 4px; }
  .row { margin: 0 10px; border-top: 1px solid #eeeeee; height: 40px; display: flex; align-items: center; justify-content: space-between; padding-left: 5px; }
  .row.tall { height: 46px; }
  .switch { appearance: none; width: 50px; height: 24px; border-radius: 8px; background: #d6d6d6; margin-right: 1px; }
  .switch::before { content: ""; display: block; width: 30px; height: 24px; border-radius: 8px; background: #979797; box-shadow: 0 2px 4px rgba(0,0,0,.3); }
  .pick { display: grid; align-items: center; justify-items: end; margin-right: 6px; color: #8d8d8d; }
  .pick > * { grid-area: 1 / 1; }
  select { appearance: none; border: 0; background: none; padding: 0 22px 0 0; outline: 0; }
  .pick ui-icon { pointer-events: none; }
  .gap { margin-top: 11px; }
  .slide { padding: 10px 10px 8px; }
  .slide h3 { margin-bottom: 14px; }
  .thumb { position: absolute; right: 2px; top: 52px; width: 6px; height: 546px; border-radius: 3px; background: #ababab; }`,
  () => `<aside>
      <header><ui-icon name="appSettings" size="30"></ui-icon><button aria-label="侧边栏"><ui-icon name="panel"></ui-icon></button></header>
      <search-field icon="14"></search-field>
      <nav>${[['sSystem', '系统'], ['sNetwork', '网络'], ['sPersonal', '个性化', 'on'], ['sDevice', '设备'], ['sPower', '电源管理'], ['sAccount', '账户'], ['sCloud', 'deepin ID'], ['sUpdate', '系统更新']]
        .map(([i, t, s]) => `<module-item icon="${i}" state="${s || ''}">${t}</module-item>`).join('')}</nav>
    </aside>
    <div class="pane">
      <div class="bar"><button aria-label="返回"><ui-icon name="back"></ui-icon></button>
        <div class="crumbs"><a href="#">个性化</a><i>/</i><a href="#">窗口效果</a></div><window-controls middle="max"></window-controls></div>
      <div class="scroll">
        <h2>界面效果</h2>
        <setting-card><effect-list></effect-list></setting-card>
        <h2>窗口设置</h2>
        <setting-card>
          <div class="block"><h3>窗口圆角</h3><corner-picker></corner-picker></div>
          <div class="row"><label for="move">窗口移动时启用透明特效</label><input id="move" class="switch" type="checkbox" role="switch"></div>
          <div class="row tall"><label for="mini">最小化时效果</label><span class="pick"><select id="mini"><option>缩放</option><option>魔灯</option></select><ui-icon name="down"></ui-icon></span></div>
        </setting-card>
        <setting-card class="gap"><div class="slide"><h3>不透明度调节</h3><opacity-slider label="不透明度调节"></opacity-slider></div></setting-card>
        <setting-card class="gap"><div class="block"><h3>&nbsp;</h3></div></setting-card>
      </div>
      <div class="thumb"></div>
    </div>`);

/* ---------- notification ---------- */
define('desktop-toast', `
  :host { position: absolute; right: 10px; bottom: 63px; width: 360px; box-sizing: border-box; padding: 9px 10px 8px 11px; display: flex; gap: 11px; border-radius: 13px;
    background: #efefef; color: #3c3c3c; font-size: 12px; line-height: 18px; box-shadow: 0 0 0 1px rgba(0,0,0,.13), 0 6px 24px rgba(0,0,0,.2); }
  .text { flex: 1; }
  header { display: flex; justify-content: space-between; font-size: 10px; line-height: 16px; margin-bottom: 3px; font-weight: 500; }
  b { display: block; font-weight: 900; }
  .actions { display: flex; justify-content: flex-end; gap: 5px; }
  button { height: 30px; padding: 0 6px; min-width: 50px; border-radius: 6px; background: #f4f4f4; box-shadow: 0 3px 10px rgba(0,0,0,.1); font-size: 14px; line-height: 20px; }`,
  a => `<ui-icon name="capture"></ui-icon><div class="text"><header><span>${a('app')}</span><time>${a('time')}</time></header><b>${a('heading')}</b><slot></slot>
    <div class="actions"><button>查看</button><button>打开文件夹</button></div></div>`);

/* ---------- dock ---------- */
define('task-dock', `
  :host { display: flex; height: 49px; flex: none; box-sizing: border-box; border-top: 1px solid #c9cacd; background: linear-gradient(90deg, #e9e9eb 70%, #ebecec 85%); color: #1a1a1a; z-index: 1; }
  .side { flex: 1 1 0; display: flex; align-items: center; }
  .start button { margin-left: 15px; }
  .apps { width: 528px; display: flex; align-items: center; justify-content: space-between; }
  .apps button { position: relative; height: 48px; }
  .apps .open::after { content: ""; position: absolute; bottom: 3px; left: 9px; width: 10px; height: 2px; border-radius: 1px; background: #000; }
  .apps .active::after { background: #1f6ce6; }
  .tray { justify-content: flex-end; gap: 7px; }
  .icons { display: flex; gap: 10px; }
  .clock { display: flex; flex-direction: column; align-items: center; width: 53px; font-size: 16px; line-height: 18px; font-weight: 500; }
  .clock small { font-size: 11px; line-height: 14px; font-weight: 400; color: #444; }
  .peek { width: 10px; height: 48px; border-left: 1px solid #b9babc; margin-left: 3px; }`,
  () => `<div class="side start"><button aria-label="全局搜索"><ui-icon name="search28"></ui-icon></button></div>
    <div class="apps">${[['launcher', '启动器'], ['multitask', '多任务视图'], ['appFiles', '文件管理器', 'open'], ['store', '应用商店'], ['browser', '浏览器'], ['mail', '邮箱'], ['editor', '编辑器'], ['cal', '日历'], ['music28', '音乐'], ['notes', '便笺'], ['calc', '计算器'], ['appSettings', '控制中心', 'open active'], ['trashFull', '回收站'], ['firefox', 'Firefox', 'open']]
      .map(([i, t, s]) => `<button aria-label="${t}" class="${s || ''}">${i === 'cal' ? '<calendar-icon></calendar-icon>' : `<ui-icon name="${i}"></ui-icon>`}</button>`).join('')}</div>
    <div class="side tray"><div class="icons">${['Wave', 'Clip', 'Keys', 'Board', 'Power', 'Next', 'Shot', 'Pen', 'Volume', 'Switch'].map(n => `<ui-icon name="t${n}"></ui-icon>`).join('')}</div>
      <div class="clock"><time>21:03</time><small>2025/4/11</small></div><div class="peek"></div></div>`);

define('calendar-icon', `
  :host { display: flex; align-items: center; justify-content: center; width: 28px; height: 28px; box-sizing: border-box; border: solid #e8382f; border-width: 1px 1px 3px; border-radius: 6px; background: linear-gradient(#f7c9c5 4px, #fff 8px);
    font: 16px/20px "Liberation Sans", sans-serif; color: #e0271e; padding-top: 2px; }`,
  () => `<span>20</span>`);
</script>
</body>
</html>
